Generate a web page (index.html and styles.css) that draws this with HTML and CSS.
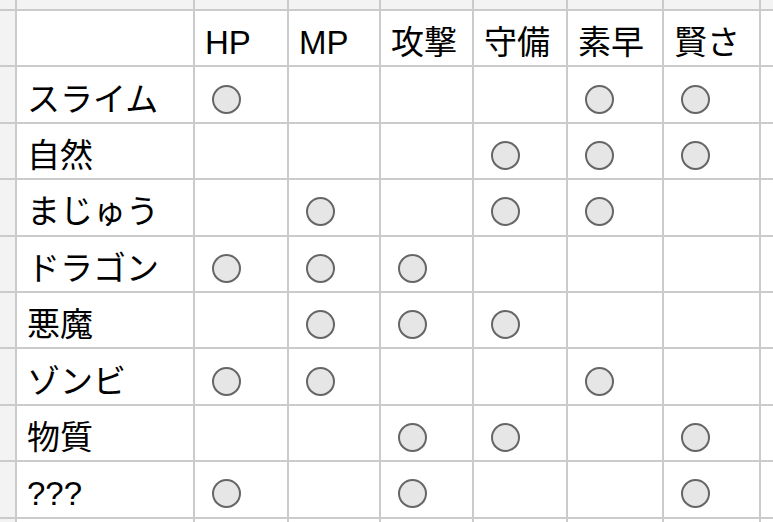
FILE: index.html
```html
<!DOCTYPE html>
<html lang="ja">
<head>
<meta charset="utf-8">
<title>タイプ表</title>
<link rel="stylesheet" href="styles.css">
</head>
<body>
<div class="sheet">
  <div class="c hd"></div><div class="c hd"></div><div class="c hd"></div><div class="c hd"></div><div class="c hd"></div><div class="c hd"></div><div class="c hd"></div><div class="c hd"></div><div class="c hd"></div>

  <div class="c rh"></div><div class="c t"></div><div class="c t">HP</div><div class="c t">MP</div><div class="c t">攻撃</div><div class="c t">守備</div><div class="c t">素早</div><div class="c t">賢さ</div><div class="c"></div>

  <div class="c rh"></div><div class="c t">スライム</div><div class="c r"><span class="radio"></span></div><div class="c"></div><div class="c"></div><div class="c"></div><div class="c r"><span class="radio"></span></div><div class="c r"><span class="radio"></span></div><div class="c"></div>

  <div class="c rh"></div><div class="c t">自然</div><div class="c"></div><div class="c"></div><div class="c"></div><div class="c r"><span class="radio"></span></div><div class="c r"><span class="radio"></span></div><div class="c r"><span class="radio"></span></div><div class="c"></div>

  <div class="c rh"></div><div class="c t">まじゅう</div><div class="c"></div><div class="c r"><span class="radio"></span></div><div class="c"></div><div class="c r"><span class="radio"></span></div><div class="c r"><span class="radio"></span></div><div class="c"></div><div class="c"></div>

  <div class="c rh"></div><div class="c t">ドラゴン</div><div class="c r"><span class="radio"></span></div><div class="c r"><span class="radio"></span></div><div class="c r"><span class="radio"></span></div><div class="c"></div><div class="c"></div><div class="c"></div><div class="c"></div>

  <div class="c rh"></div><div class="c t">悪魔</div><div class="c"></div><div class="c r"><span class="radio"></span></div><div class="c r"><span class="radio"></span></div><div class="c r"><span class="radio"></span></div><div class="c"></div><div class="c"></div><div class="c"></div>

  <div class="c rh"></div><div class="c t">ゾンビ</div><div class="c r"><span class="radio"></span></div><div class="c r"><span class="radio"></span></div><div class="c"></div><div class="c"></div><div class="c r"><span class="radio"></span></div><div class="c"></div><div class="c"></div>

  <div class="c rh"></div><div class="c t">物質</div><div class="c"></div><div class="c"></div><div class="c r"><span class="radio"></span></div><div class="c r"><span class="radio"></span></div><div class="c"></div><div class="c r"><span class="radio"></span></div><div class="c"></div>

  <div class="c rh"></div><div class="c t">???</div><div class="c r"><span class="radio"></span></div><div class="c"></div><div class="c r"><span class="radio"></span></div><div class="c"></div><div class="c"></div><div class="c r"><span class="radio"></span></div><div class="c"></div>

  <div class="c rh"></div><div class="c"></div><div class="c"></div><div class="c"></div><div class="c"></div><div class="c"></div><div class="c"></div><div class="c"></div><div class="c"></div>
</div>
</body>
</html>
```

FILE: styles.css
```css
html, body {
  margin: 0;
  padding: 0;
  background: #ffffff;
  overflow: hidden;
}

.sheet {
  width: 773px;
  height: 522px;
  overflow: hidden;
  display: grid;
  grid-template-columns: 15px 176px 92px 90px 91px 92px 94px 95px 1fr;
  grid-template-rows: 9px repeat(10, 54.4px);
  gap: 2px;
  background: #cbcbcb;
  font-family: "Liberation Sans", "Noto Sans CJK JP", sans-serif;
  font-size: 33px;
  color: #000;
}

.c {
  background: #ffffff;
  display: flex;
  align-items: center;
  box-sizing: border-box;
  min-width: 0;
  overflow: hidden;
}

.hd, .rh {
  background: #f3f3f3;
}

.t {
  padding: 9px 0 0 10px;
  line-height: 1;
  white-space: nowrap;
}

.r {
  padding: 9px 0 0 17px;
}

.radio {
  display: block;
  width: 29px;
  height: 29px;
  box-sizing: border-box;
  border-radius: 50%;
  border: 2px solid #666666;
  background: #e6e6e6;
}
```
